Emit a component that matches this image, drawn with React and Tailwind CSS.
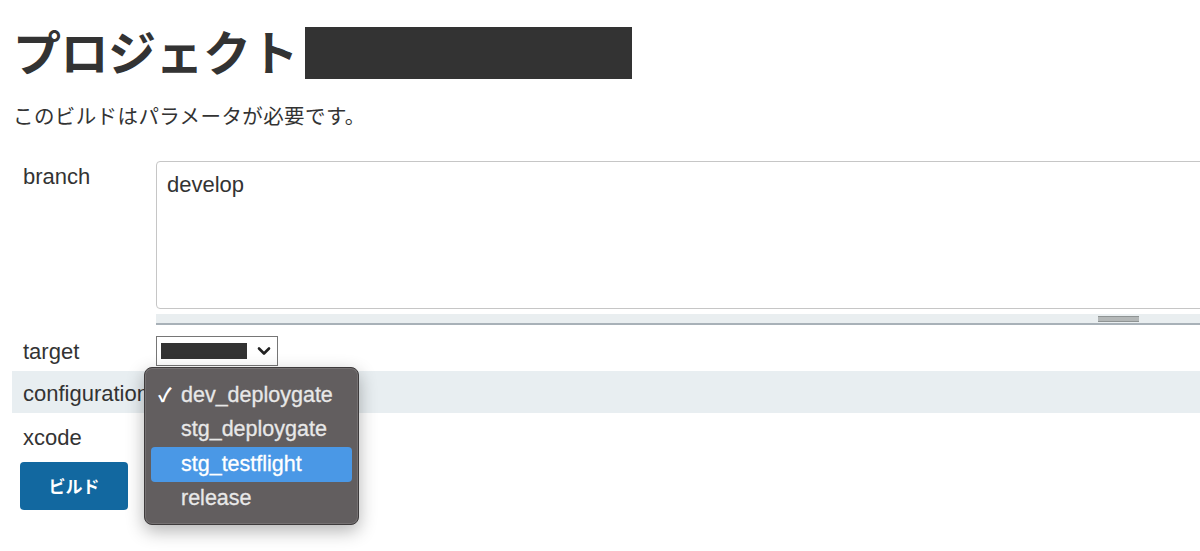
import { useState } from 'react';

const font = "font-['Liberation_Sans','Noto_Sans_CJK_JP',sans-serif]";
const jp = "font-['Noto_Sans_CJK_JP','Liberation_Sans',sans-serif]";

const options = ['dev_deploygate', 'stg_deploygate', 'stg_testflight', 'release'];

function FakeSelect() {
  return (
    <div className="flex h-[30px] w-[122px] items-center border border-[#767676] bg-white pl-[4px] pr-[6px]">
      <div className="h-[16px] w-[86px] bg-[#333]" />
      <svg className="ml-auto" width="14" height="10" viewBox="0 0 14 10">
        <path d="M2 2.5 L7 7.5 L12 2.5" fill="none" stroke="#222" strokeWidth="2.6" strokeLinecap="round" strokeLinejoin="round" />
      </svg>
    </div>
  );
}

function Menu({ selected, hover }) {
  return (
    <div className="absolute left-[144px] top-[367px] w-[215px] rounded-[8px] border border-[#3e3b3c] bg-[#625e5f] px-[6px] pt-[10px] pb-[8px] shadow-[0_6px_18px_rgba(0,0,0,0.3),inset_0_0_0_1px_rgba(255,255,255,0.12)]">
      {options.map((o, i) => (
        <div
          key={o}
          className={`flex h-[34.5px] items-center rounded-[4px] ${i === hover ? 'bg-[#4a98e6] text-white' : 'text-[#e8e8e8]'}`}
        >
          <span className="w-[30px] pl-[7px] text-[19px] font-bold leading-none text-white">{i === selected ? '✓' : ''}</span>
          <span className="text-[21.5px] leading-none [-webkit-text-stroke:0.3px_currentColor]">{o}</span>
        </div>
      ))}
    </div>
  );
}

export default function App() {
  const [branch, setBranch] = useState('develop');

  return (
    <div className={`relative h-[551px] w-[1200px] overflow-hidden bg-white text-[#333] ${font}`}>
      <div className="pl-[13px] pt-[22px]">
        <div className="flex items-start">
          <h1 className={`text-[48px] font-bold leading-[56px] tracking-[-0.5px] ${jp}`}>プロジェクト</h1>
          <div className="ml-[7px] mt-[5px] h-[52px] w-[327px] bg-[#333]" />
        </div>
        <p className={`mt-[22px] text-[20.5px] leading-[28px] tracking-[0.4px] ${jp}`}>このビルドはパラメータが必要です。</p>
      </div>

      <div className="mt-[24px] pl-[12px] text-[22px]">
        <div className="grid grid-cols-[144px_1fr] pt-[8px]">
          <div className="pl-[11px] pt-[4px] leading-[24px]">branch</div>
          <div>
            <textarea
              value={branch}
              onChange={(e) => setBranch(e.target.value)}
              className="block h-[148px] w-[1100px] resize-none rounded-[4px] border border-[#c6c6c6] px-[10px] py-[9px] text-[22px] leading-[28px] text-[#333] outline-none"
            />
            <div className="relative mt-[5px] mb-[6px] h-[11px] w-[1100px] border-b-2 border-[#a8b1b8] bg-[#e9eef0]">
              <div className="absolute left-[942px] top-[2px] h-[6px] w-[41px] border-y border-[#8f9494] bg-[#b4b8b8]" />
            </div>
          </div>
        </div>

        <div className="grid h-[40px] grid-cols-[144px_1fr] items-center">
          <div className="pl-[11px]">target</div>
          <FakeSelect />
        </div>

        <div className="grid h-[42px] w-[1188px] grid-cols-[144px_1fr] items-center bg-[#e8eef1]">
          <div className="pl-[11px] pt-[3px]">configuration</div>
          <FakeSelect />
        </div>

        <div className="grid h-[48px] grid-cols-[144px_1fr] items-center">
          <div className="pl-[11px]">xcode</div>
          <FakeSelect />
        </div>

        <button className={`ml-[8px] mt-[1px] h-[48px] w-[108px] rounded-[4px] bg-[#1268a0] text-[17px] font-bold text-white ${jp}`}>
          ビルド
        </button>
      </div>

      <Menu selected={0} hover={2} />
    </div>
  );
}
